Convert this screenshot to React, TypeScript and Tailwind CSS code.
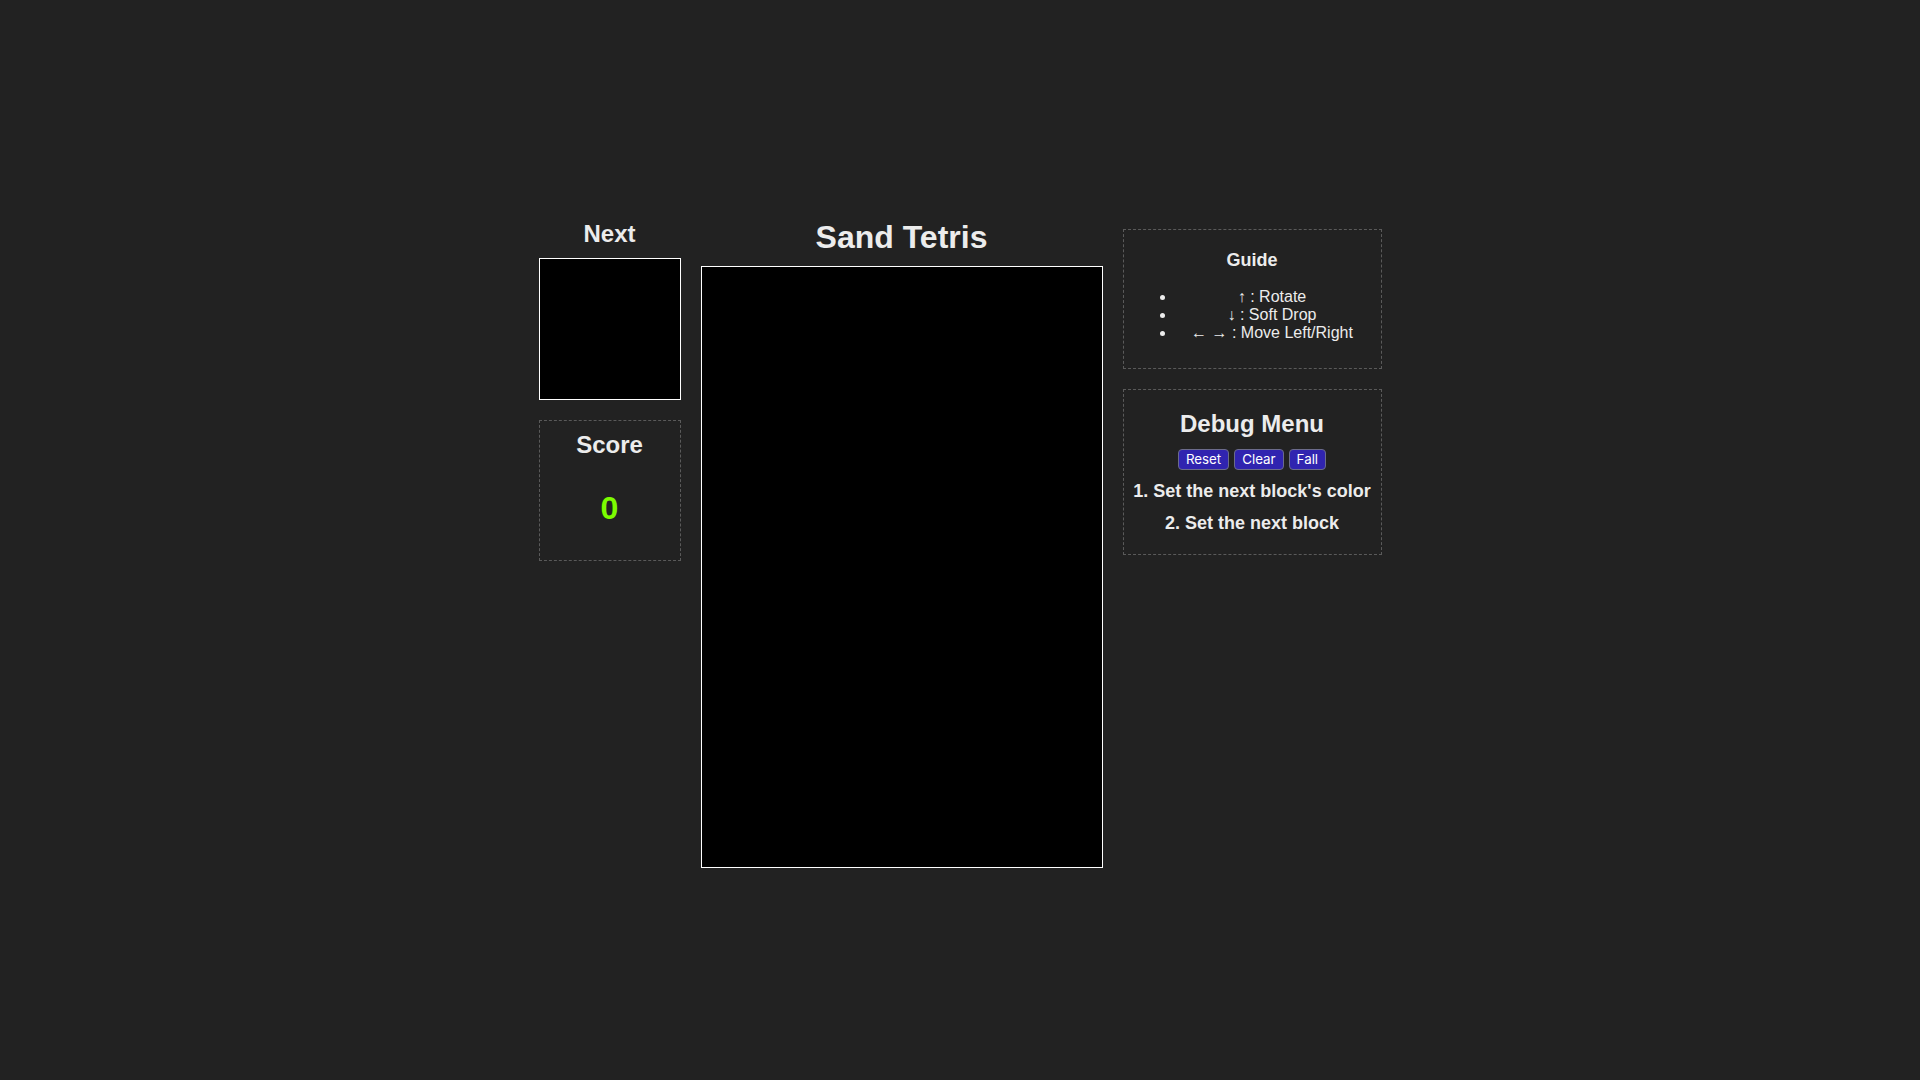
import React from "react";

const font = { fontFamily: '"Liberation Sans", Arial, sans-serif' };

function DebugButton({ label }: { label: string }) {
  return (
    <button
      className="h-[21px] px-[7px] rounded-[4px] border border-[#6b6b8a] bg-[#3024b0] text-white text-[13.33px] leading-[16px]"
      style={{ fontFamily: 'Inter, "Noto Sans", sans-serif' }}
    >
      {label}
    </button>
  );
}

export default function App() {
  const guide = ["↑ : Rotate", "↓ : Soft Drop", "← → : Move Left/Right"];

  return (
    <div className="min-h-screen bg-[#222222] text-[#ececec] flex items-center justify-center" style={font}>
      <div className="flex items-start gap-5 mt-[4px]">
        {/* left column */}
        <div className="w-[142px] flex flex-col items-center mt-[3px]">
          <h2 className="text-[24px] font-bold leading-[28px] mb-[10px]">Next</h2>
          <div className="w-[142px] h-[142px] border border-white bg-black" />
          <div className="mt-5 w-[142px] h-[141px] border border-dashed border-[#5a5a5a] flex flex-col items-center pt-[10px]">
            <h2 className="text-[24px] font-bold leading-[28px]">Score</h2>
            <div className="mt-[31px] text-[32px] font-bold leading-[37px] text-[#7cfc00]">0</div>
          </div>
        </div>

        {/* board */}
        <div className="flex flex-col items-center">
          <h1 className="text-[32px] font-bold leading-[37px] pt-[2px] mb-[10px]">Sand Tetris</h1>
          <div className="w-[402px] h-[602px] border border-white bg-black" />
        </div>

        {/* right column */}
        <div className="w-[259px] flex flex-col gap-5 mt-[12px]">
          <div className="h-[140px] border border-dashed border-[#5a5a5a] px-3 pt-5">
            <h3 className="text-center text-[18px] font-bold leading-[21px] mb-[17px]">Guide</h3>
            <ul className="list-disc pl-10 text-[16px] leading-[18.4px]">
              {guide.map(g => (
                <li key={g} className="text-center">{g}</li>
              ))}
            </ul>
          </div>

          <div className="h-[166px] border border-dashed border-[#5a5a5a] pt-5 flex flex-col items-center">
            <h2 className="text-[24px] font-bold leading-[28px]">Debug Menu</h2>
            <div className="flex gap-[5px] mt-[11px]">
              <DebugButton label="Reset" />
              <DebugButton label="Clear" />
              <DebugButton label="Fall" />
            </div>
            <p className="mt-[11px] text-[18px] font-bold leading-[21px]">1. Set the next block's color</p>
            <p className="mt-[11px] text-[18px] font-bold leading-[21px]">2. Set the next block</p>
          </div>
        </div>
      </div>
    </div>
  );
}
